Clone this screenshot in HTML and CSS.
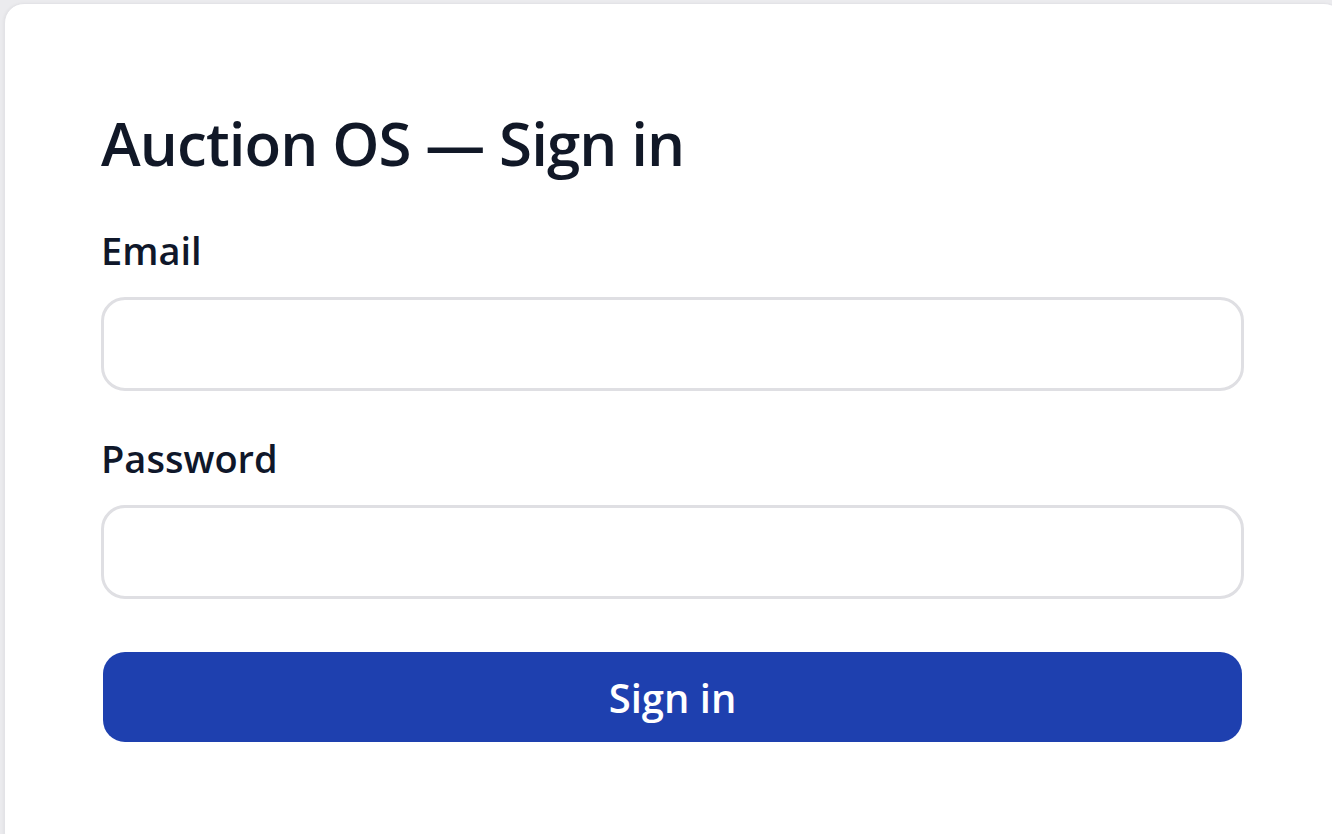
FILE: index.html
```html
<!DOCTYPE html>
<html lang="en">
<head>
<meta charset="utf-8">
<title>Auction OS — Sign in</title>
<link rel="stylesheet" href="styles.css">
</head>
<body>
<div class="page">
  <main class="card">
    <form class="form">
      <h1 class="title">Auction OS — Sign in</h1>
      <label class="label" for="email">Email</label>
      <input class="input" id="email" type="email">
      <label class="label label-pw" for="password">Password</label>
      <input class="input" id="password" type="password">
      <button class="btn" type="button">Sign in</button>
    </form>
  </main>
</div>
</body>
</html>
```
FILE: styles.css
```css
html, body {
  margin: 0;
  height: 100%;
}
body {
  background: #ebebee;
  font-family: "Open Sans", "Noto Sans", sans-serif;
  color: #111827;
  overflow: hidden;
}
.page {
  padding: 3px 0 0 4px;
}
.card {
  box-sizing: border-box;
  width: 1340px;
  height: 850px;
  background: #ffffff;
  border: 1px solid #e3e3e7;
  border-radius: 20px;
  padding: 103px 0 0 96px;
  box-shadow: -1px 0 3px rgba(0, 0, 0, 0.04);
}
.form {
  display: flex;
  flex-direction: column;
  width: 1143px;
}
.title {
  margin: 0 0 40px 0;
  font-size: 60px;
  line-height: 72px;
  font-weight: 600;
  letter-spacing: -0.9px;
}
.label {
  font-size: 38px;
  line-height: 63px;
  font-weight: 600;
  margin-bottom: 15px;
  color: #0f172a;
}
.label-pw {
  margin-top: 36px;
}
.input {
  box-sizing: border-box;
  height: 94px;
  width: 100%;
  border: 3px solid #dfdfe3;
  border-radius: 24px;
  background: #fff;
  font: inherit;
  outline: none;
}
.btn {
  margin: 53px 2px 0 2px;
  height: 90px;
  border: none;
  border-radius: 22px;
  background: #1e40af;
  color: #ffffff;
  font-family: inherit;
  font-size: 40px;
  font-weight: 600;
  cursor: pointer;
}
```
